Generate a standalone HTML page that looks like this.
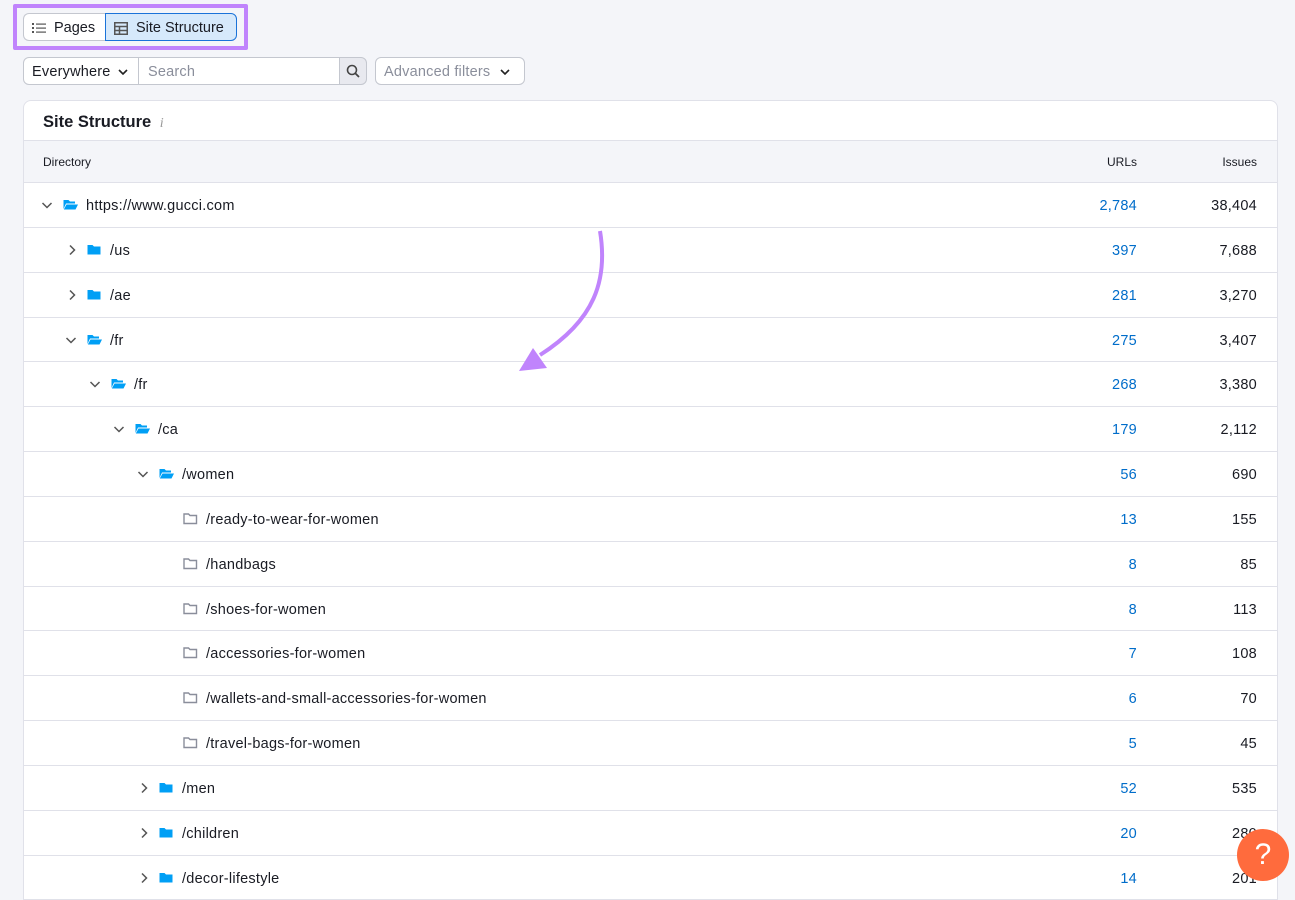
<!DOCTYPE html><html><head><style>
*{box-sizing:border-box;margin:0;padding:0}
body{width:1295px;height:890px;overflow:hidden;background:#f4f5f9;font-family:"Liberation Sans",sans-serif;color:#191b23;position:relative}
.hl{position:absolute;left:13px;top:4px;width:235px;height:46px;border:4px solid #c084fc;border-radius:2px}
.tabs{position:absolute;left:23px;top:13px;height:28px;display:flex;font-size:14.5px;white-space:nowrap}
.tab{display:flex;align-items:center;gap:8px;padding:0 8px;border:1px solid #c4c7cf;background:#fff;height:28px;padding-top:2px}
.tab.a{background:#d6e9fb;border-color:#1a73d9;border-radius:0 6px 6px 0;width:132px}
.tab.p{border-radius:6px 0 0 6px;border-right:none;width:82px}
.ctl{position:absolute;top:57px;height:28px;border:1px solid #c4c7cf;background:#fff;font-size:14.5px;display:flex;align-items:center;letter-spacing:0.2px;padding-top:2px;white-space:nowrap}
.card{position:absolute;left:23px;top:100px;width:1255px;height:800px;background:#fff;border:1px solid #e0e1e9;border-radius:8px 8px 0 0;overflow:hidden}
.ttl{height:40px;border-bottom:1px solid #e0e1e9;padding:12px 0 0 19px;font-weight:bold;font-size:16.5px}
.hd{height:42px;background:#f4f5f9;border-bottom:1px solid #e0e1e9;font-size:12px;position:relative}
.row{height:44.85px;border-bottom:1px solid #e0e1e9;position:relative;font-size:14.5px;letter-spacing:0.25px}
.u{position:absolute;right:140px;top:15px;color:#006dca}
.i{position:absolute;right:20px;top:15px}
.n{position:absolute;top:15px;display:flex;align-items:center}
.chev{position:absolute;top:16px}
.fold{position:absolute;top:15px}
</style></head><body>
<div class="hl"></div>
<div class="tabs"><div class="tab p"><svg width="14" height="12"><g fill="#555"><rect x="0" y="1" width="2" height="2"/><rect x="0" y="5" width="2" height="2"/><rect x="0" y="9" width="2" height="2"/><rect x="4" y="1.5" width="10" height="1.2"/><rect x="4" y="5.5" width="10" height="1.2"/><rect x="4" y="9.5" width="10" height="1.2"/></g></svg>Pages</div><div class="tab a"><svg width="14" height="13"><rect x="0.75" y="0.75" width="12.5" height="11.5" fill="none" stroke="#555" stroke-width="1.5"/><path d="M1 4.5h12M1 8.5h12M5.5 4.5v8" stroke="#555" stroke-width="1.5"/></svg>Site Structure</div></div>
<div class="ctl" style="left:23px;width:116px;border-radius:6px 0 0 6px;padding-left:8px">Everywhere<svg style="margin-left:7px" width="10" height="6"><path d="M1 1l4 4 4-4" fill="none" stroke="#222" stroke-width="1.6"/></svg></div>
<div class="ctl" style="left:138px;width:202px;padding-left:9px;color:#8a8e9b">Search</div>
<div class="ctl" style="left:339px;width:28px;background:#e8e9ef;border-radius:0 6px 6px 0;justify-content:center;padding-top:0"><svg width="14" height="14"><circle cx="6" cy="6" r="4.5" fill="none" stroke="#444" stroke-width="1.6"/><path d="M9.5 9.5l3.5 3.5" stroke="#444" stroke-width="1.8"/></svg></div>
<div class="ctl" style="left:375px;width:150px;border-radius:6px;padding-left:8px;color:#8a8e9b">Advanced filters<svg style="margin-left:10px" width="10" height="6"><path d="M1 1l4 4 4-4" fill="none" stroke="#222" stroke-width="1.6"/></svg></div>
<div class="card">
<div class="ttl">Site Structure <span style="font-weight:normal;font-style:italic;color:#999;font-size:14px;font-family:'Liberation Serif',serif;margin-left:4px">i</span></div>
<div class="hd"><span style="position:absolute;left:19px;top:14px">Directory</span><span style="position:absolute;right:140px;top:14px">URLs</span><span style="position:absolute;right:20px;top:14px">Issues</span></div>
<div id="rows"></div>
</div>
<svg style="position:absolute;left:0;top:0" width="1295" height="890"><path d="M600 231 C608 280 595 320 540 355" fill="none" stroke="#c084fc" stroke-width="4"/><path d="M519 371 L533 348 L547 368 Z" fill="#c084fc"/></svg>
<div style="position:absolute;left:1237px;top:829px;width:52px;height:52px;border-radius:50%;background:#ff6b3d;color:#fff;font-size:30px;text-align:center;line-height:52px">?</div>
<script>
var d=[[0,'o','https://www.gucci.com','2,784','38,404'],[1,'c','/us','397','7,688'],[1,'c','/ae','281','3,270'],[1,'o','/fr','275','3,407'],[2,'o','/fr','268','3,380'],[3,'o','/ca','179','2,112'],[4,'o','/women','56','690'],[5,'l','/ready-to-wear-for-women','13','155'],[5,'l','/handbags','8','85'],[5,'l','/shoes-for-women','8','113'],[5,'l','/accessories-for-women','7','108'],[5,'l','/wallets-and-small-accessories-for-women','6','70'],[5,'l','/travel-bags-for-women','5','45'],[4,'c','/men','52','535'],[4,'c','/children','20','280'],[4,'c','/decor-lifestyle','14','201']];
var h='';d.forEach(function(r){var L=r[0],x=17+24*L,fx=39+24*L,tx=62+24*L;
var ch='';if(r[1]=='o')ch='<svg class="chev" style="left:'+x+'px" width="12" height="12"><path d="M1.5 4l4.5 4.5 4.5-4.5" fill="none" stroke="#555" stroke-width="1.5"/></svg>';
else if(r[1]=='c')ch='<svg class="chev" style="left:'+(x+1)+'px" width="12" height="12"><path d="M4 1.5l4.5 4.5-4.5 4.5" fill="none" stroke="#555" stroke-width="1.5"/></svg>';
var f;if(r[1]=='o')f='<svg class="fold" style="left:'+fx+'px" width="15" height="13"><path d="M0.5 2h5l1.5 1.5h5v2H3L0.5 11z" fill="#009ff5"/><path d="M3.5 6.5H15l-2.5 5H0.8z" fill="#009ff5"/></svg>';
else if(r[1]=='c')f='<svg class="fold" style="left:'+fx+'px" width="14" height="13"><path d="M0.5 2h5l1.5 1.5h6.5v8H0.5z" fill="#009ff5"/></svg>';
else f='<svg class="fold" style="left:'+fx+'px" width="15" height="13"><path d="M1 2h4.5l1.5 1.5h6.5v8H1z" fill="none" stroke="#8a8e9b" stroke-width="1.4"/></svg>';
h+='<div class="row">'+ch+f+'<span class="n" style="left:'+tx+'px">'+r[2]+'</span><span class="u">'+r[3]+'</span><span class="i">'+r[4]+'</span></div>';});
document.getElementById('rows').innerHTML=h;
</script>
</body></html>
